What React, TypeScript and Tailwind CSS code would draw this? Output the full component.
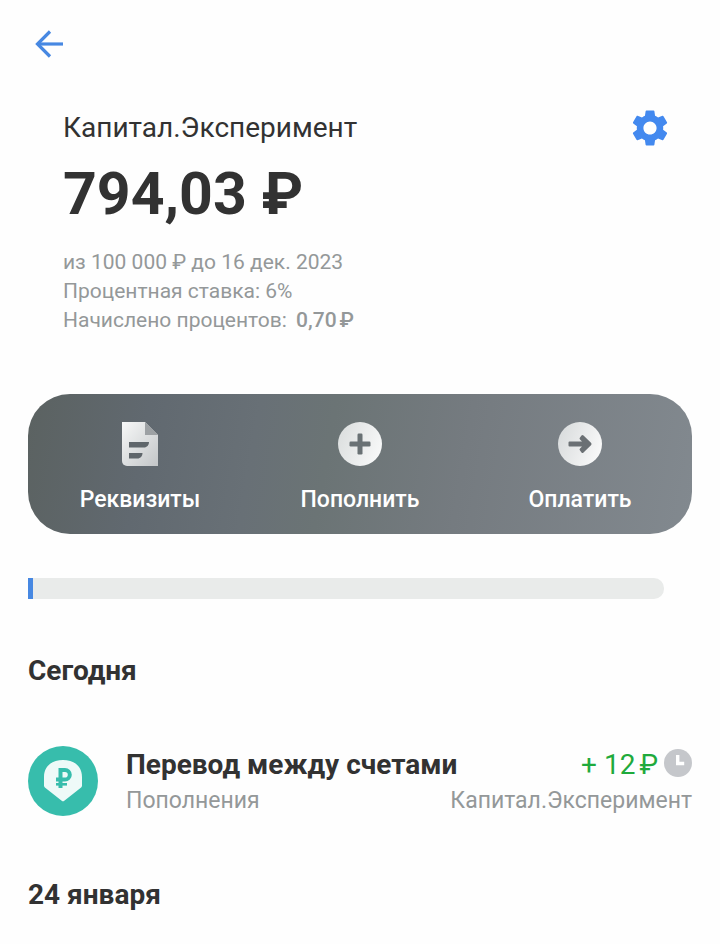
import type { ReactNode } from 'react'
import { MdSettings } from 'react-icons/md'

const BALANCE = { saved: 794.03, goal: 100000 }

function BackIcon() {
  return (
    <svg viewBox="0 0 28 28" className="h-7 w-7" fill="none" stroke="currentColor" strokeWidth="3.2">
      <path d="M28 14H3" />
      <path d="M15 1.5 2.5 14 15 26.5" />
    </svg>
  )
}

function DocumentIcon() {
  return (
    <svg viewBox="0 0 36 44" className="h-11 w-9">
      <defs>
        <linearGradient id="doc" x1="0" y1="0" x2="1" y2="1">
          <stop offset="0" stopColor="#f7f8f8" />
          <stop offset="1" stopColor="#c3c6c8" />
        </linearGradient>
      </defs>
      <path d="M0 0h23l13 13v31H5a5 5 0 0 1-5-5z" fill="url(#doc)" />
      <path d="M23 0l13 13H23z" fill="#9da1a4" />
      <path d="M7 20h20c0 3-2 5.500-5 5.500H7zM7 31h13.500c0 3-2 5.500-5 5.500H7z" fill="#5f666b" />
    </svg>
  )
}

function PlusIcon() {
  return (
    <svg viewBox="0 0 44 44" className="h-11 w-11">
      <defs>
        <linearGradient id="plus" x1="0" y1="0.3" x2="1" y2="0.7">
          <stop offset="0" stopColor="#dcdfdf" />
          <stop offset="1" stopColor="#f8f9f9" />
        </linearGradient>
      </defs>
      <circle cx="22" cy="22" r="22" fill="url(#plus)" />
      <rect x="19.500" y="11.500" width="5" height="21" rx="1.200" fill="#697174" />
      <rect x="11.500" y="19.500" width="21" height="5" rx="1.200" fill="#697174" />
    </svg>
  )
}

function PayIcon() {
  return (
    <svg viewBox="0 0 44 44" className="h-11 w-11">
      <defs>
        <linearGradient id="pay" x1="0" y1="0.3" x2="1" y2="0.7">
          <stop offset="0" stopColor="#d9dcdd" />
          <stop offset="1" stopColor="#fafafa" />
        </linearGradient>
      </defs>
      <circle cx="22" cy="22" r="22" fill="url(#pay)" />
      <path
        d="M10.500 20.500q0-1 1-1h12.500l-2-2q-1-1 0-2l1.500-2q1-1 2 0l7.500 7.300q1.200 1.200 0 2.400l-7.500 7.300q-1 1-2 0l-1.500-2q-1-1 0-2l2-2H11.500q-1 0-1-1z"
        fill="#6b7074"
      />
    </svg>
  )
}

function TransferIcon() {
  return (
    <svg viewBox="0 0 70 70" className="h-[70px] w-[70px] shrink-0">
      <circle cx="35" cy="35" r="35" fill="#37bdac" />
      <path
        d="M16 31C16 20 24 14 35 14s19 6 19 17v8.500q0 1.500-1.500 2.500L36.300 54.700q-1.300 1-2.600 0L17.500 42Q16 41 16 39.500z"
        fill="#eefaf8"
      />
      <g fill="none" stroke="#37bdac">
        <path d="M32.500 42V24h4.500a4.800 4.800 0 0 1 0 9.600H28" strokeWidth="4" />
        <path d="M28 38.300h11" strokeWidth="2.600" />
      </g>
    </svg>
  )
}

function PendingIcon() {
  return (
    <svg viewBox="0 0 28 28" className="mt-0.5 h-7 w-7">
      <circle cx="14" cy="14" r="14" fill="#c5c7cb" />
      <path d="M13.700 6v8.500h6.500" fill="none" stroke="#fff" strokeWidth="3.400" />
    </svg>
  )
}

const ACTIONS: { label: string; icon: ReactNode }[] = [
  { label: 'Реквизиты', icon: <DocumentIcon /> },
  { label: 'Пополнить', icon: <PlusIcon /> },
  { label: 'Оплатить', icon: <PayIcon /> },
]

const HISTORY = [
  {
    day: 'Сегодня',
    items: [
      { title: 'Перевод между счетами', category: 'Пополнения', amount: '+ 12', account: 'Капитал.Эксперимент' },
    ],
  },
  { day: '24 января', items: [] },
]

export default function App() {
  // a barely started goal still gets a visible sliver
  const percent = Math.max((BALANCE.saved / BALANCE.goal) * 100, 0.8)

  return (
    <main className="min-h-screen bg-[#fefefe] px-7 pb-4 font-['Roboto',sans-serif] text-[#323232]">
      <header className="pt-[22px]">
        <button aria-label="Назад" className="flex h-11 w-[42px] items-center justify-center text-[#4788e2]">
          <BackIcon />
        </button>
      </header>

      <section className="mt-10 pl-[35px] pr-5">
        <div className="flex items-center justify-between">
          <h1 className="text-[28px] leading-11">Капитал.Эксперимент</h1>
          <button aria-label="Настройки" className="text-[#4389ef]">
            <MdSettings className="h-11 w-11" />
          </button>
        </div>
        <p className="mt-2 text-[59px] leading-[72px] font-bold">794,03 ₽</p>
        <div className="mt-[18px] text-[21px] leading-[29px] text-[#949899]">
          <p>из 100 000 ₽ до 16 дек. 2023</p>
          <p>Процентная ставка: 6%</p>
          <p>
            Начислено процентов:{' '}
            <span className="ml-1 font-medium">
              0,70<span className="ml-[3px]">₽</span>
            </span>
          </p>
        </div>
      </section>

      <nav className="mt-[59px] grid grid-cols-3 rounded-[42px] bg-linear-[100deg,#5b6261_0%,#616970_18%,#687076_34%,#6b7475_45%,#757b80_65%,#82898f_100%] px-0.5 pt-7 pb-5">
        {ACTIONS.map(({ label, icon }) => (
          <button key={label} className="flex flex-col items-center gap-5 text-[23px] leading-7 font-medium text-white">
            {icon}
            {label}
          </button>
        ))}
      </nav>

      <div
        role="progressbar"
        aria-label="Накоплено"
        aria-valuenow={BALANCE.saved}
        aria-valuemax={BALANCE.goal}
        className="mt-11 mr-7 h-[21px] overflow-hidden rounded-r-[10px] bg-[#e9ebea]"
      >
        <div className="h-full bg-[#4788e2]" style={{ width: `${percent}%` }} />
      </div>

      {HISTORY.map(({ day, items }) => (
        <section key={day} className="mt-14">
          <h2 className="text-[28px] leading-8 font-bold">{day}</h2>
          <ul>
            {items.map((item) => (
              <li key={item.title} className="mt-[59px] flex items-start gap-7 pb-1">
                <TransferIcon />
                <div className="min-w-0 flex-1 pt-px">
                  <div className="flex items-start justify-between">
                    <p className="text-[28px] leading-9 font-bold">{item.title}</p>
                    <div className="flex items-start gap-1.5">
                      <span className="text-[28px] leading-9 text-[#1faa3c]">
                        {item.amount}
                        <span className="ml-1">₽</span>
                      </span>
                      <PendingIcon />
                    </div>
                  </div>
                  <div className="flex items-center justify-between text-[23px] leading-9 text-[#949899]">
                    <p>{item.category}</p>
                    <p>{item.account}</p>
                  </div>
                </div>
              </li>
            ))}
          </ul>
        </section>
      ))}
    </main>
  )
}
